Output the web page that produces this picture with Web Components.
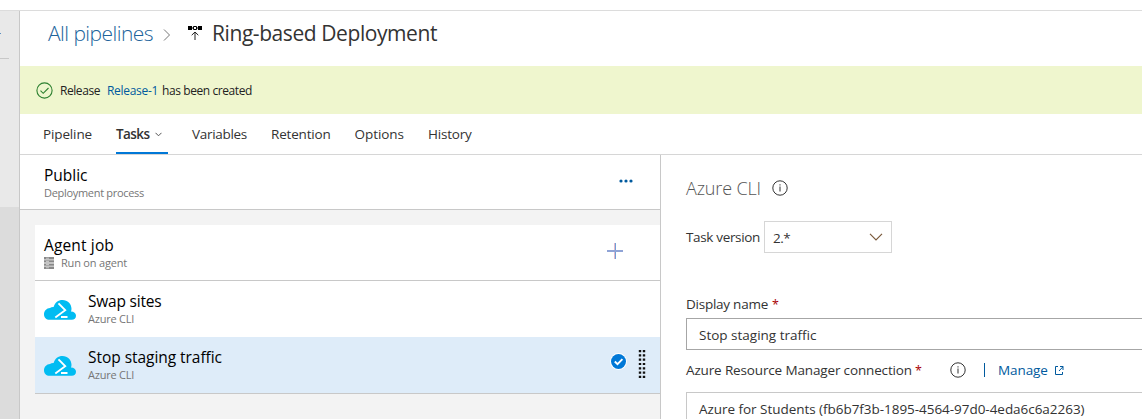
<!DOCTYPE html>
<html lang="en">
<head>
<meta charset="utf-8">
<title>Ring-based Deployment - Tasks</title>
<style>
html,body{margin:0;height:100%;overflow:hidden;background:#fff}
body{font-family:"Open Sans","Noto Sans",sans-serif;color:#333}
</style>
</head>
<body>
<release-editor></release-editor>
<script>
const define=(name,html,init)=>customElements.define(name,class extends HTMLElement{
  connectedCallback(){
    if(this.shadowRoot)return;
    const t=document.createElement('template');
    t.innerHTML=html;
    this.attachShadow({mode:'open'}).append(t.content.cloneNode(true));
    if(init)init(this);
  }
});

/* One line of text, tracked so that it fills the width in "w" */
define('fit-text','<style>:host{display:block;flex:none;white-space:pre}span{display:inline-block;white-space:pre}</style><span><slot></slot></span>',el=>{
  const span=el.shadowRoot.querySelector('span');
  const w=parseFloat(el.getAttribute('w'));
  const n=el.textContent.length;
  if(w&&n>1){
    const d=(w-span.getBoundingClientRect().width)/n;
    span.style.letterSpacing=d.toFixed(3)+'px';
    el.style.width=w+'px';
  }
});

const svg=(w,h,body)=>`<style>:host{display:block;flex:none;width:${w}px;height:${h}px}svg{display:block}</style><svg width="${w}" height="${h}" viewBox="0 0 ${w} ${h}" fill="none">${body}</svg>`;
define('icon-crumb',svg(8,12,'<path d="M1 .5 6.5 6 1 11.5" stroke="#777"/>'));
define('icon-release',svg(14,15,'<path d="M0 0h4v4H0zM10 0h4v4h-4z" fill="#000"/><path d="M5.5.5h3v3h-3zM4 2h1M9 2h1" stroke="#000"/><path d="M7 14V6.2M3.7 9.2 7 6l3.3 3.2" stroke="#222"/>'));
define('icon-success',svg(17,17,'<circle cx="8.5" cy="8.5" r="7.6" stroke="#2d8030" stroke-width="1.1"/><path d="m4.5 8.7 2.7 2.6 5.3-5.3" stroke="#2d8030" stroke-width="1.1"/>'));
define('icon-chevron-small',svg(7,5,'<path d="m.5.8 3 3 3-3" stroke="#555"/>'));
define('icon-chevron',svg(14,8,'<path d="m1 .8 6 6 6-6" stroke="#7a5a3c" stroke-width="1.2"/>'));
define('icon-more',svg(14,4,'<g fill="#005a9e"><circle cx="2" cy="2" r="1.6"/><circle cx="7" cy="2" r="1.6"/><circle cx="12" cy="2" r="1.6"/></g>'));
define('icon-plus',svg(16,16,'<path d="M7.5 0v16" stroke="#e3b9cc"/><path d="M8.5 0v16" stroke="#6e9fd8"/><path d="M0 8h16" stroke="#8fa3d6" stroke-width="2"/>'));
define('icon-server',svg(10,12,'<path d="M0 0h10v2.4H0zM0 3.2h10v2.4H0zM0 6.4h10v2.4H0zM0 9.6h10V12H0z" fill="#888"/><path d="M2 1.2h3M2 4.4h3M2 7.6h3M2 10.8h3" stroke="#ddd" stroke-width=".8"/>'));
define('icon-cloud',svg(32,20,'<path d="M5.6 19.8C2.3 19.8 0 17.4 0 14.5 0 10.9 2.6 8.3 6 8.1 7 7.2 8.2 6.9 9.6 7 11 2.6 14.2 0 18.5 0c5.1 0 8.9 3.8 9 8.7 0 1-.2 2-.5 2.9 2.9 0 5 1.7 5 4.2 0 2.4-1.8 4-4.2 4z" fill="#00bcf2"/><path d="m14.5 3.300 6.700 6.900-9.900 7.300M17 17h6.500" stroke="#fff" stroke-width="1.9"/>'));
define('icon-checked',svg(17,17,'<circle cx="8.5" cy="8.5" r="8.4" fill="#fff"/><circle cx="8.5" cy="8.5" r="7.5" fill="#0078d7"/><path d="m4.8 8.5 2.7 2.7 4.9-5" stroke="#fff" stroke-width="1.9"/>'));
define('icon-grip',svg(8,28,'<path d="M2 0v28M6 0v28" stroke="#111" stroke-width="2.4" stroke-dasharray="2.2 2.1"/>'));
define('icon-info',svg(16,16,'<circle cx="8" cy="8" r="7.2" stroke="#333"/><path d="M8 6.5V11.5M8 4.3v1.3" stroke="#444" stroke-width="1.1"/>'));
define('icon-external',svg(9,9,'<path d="M3 .5H.5v8h7V6M5 .5h3V4M8 .7 4 5" stroke="#005a9e"/>'));

define('side-rail',`<style>
:host{display:block;width:19px;flex:none;border-right:1px solid #c8c8c8;background:linear-gradient(#e9e9e9 196px,#dcdcdc 196px)}
.mark{width:1px;height:1px;padding-top:22px;background:#5b8fc0;background-clip:content-box}
.rule{width:9px;height:1px;margin-top:24px;background:#c8c8c8}
</style><div class="mark"></div><div class="rule"></div>`);

define('page-crumbs',`<style>
:host{display:flex;height:55px;padding:7px 0 0 28px;box-sizing:border-box;flex:none;font-size:21px;line-height:30px}
.all{color:#20639b;font-weight:300}icon-crumb{margin:11px 17px 0 10px}icon-release{margin:8px 10px 0 0}
</style><fit-text class="all" w="105">All pipelines</fit-text><icon-crumb></icon-crumb><icon-release></icon-release><fit-text w="225">Ring-based Deployment</fit-text>`);

define('message-bar',`<style>
:host{display:flex;align-items:center;height:48px;flex:none;background:#eff6ce;padding-left:16px;font-size:12px;color:#222}
icon-success{margin-right:7px}.link{color:#005a9e;margin:0 4px 0 7px}
</style><icon-success></icon-success><fit-text w="40">Release</fit-text><fit-text class="link" w="51">Release-1</fit-text><fit-text w="90">has been created</fit-text>`);

define('nav-tabs',`<style>
:host{display:flex;height:40px;flex:none;border-bottom:1px solid #d6d6d6;padding-left:23px;gap:24px;font-size:13.5px;color:#333}
div{display:flex;align-items:center;height:40px;box-sizing:border-box}
.on{font-weight:600;box-shadow:inset 0 -2px #0078d7;gap:5px;width:52px}
</style><div><fit-text w="49">Pipeline</fit-text></div><div class="on"><fit-text w="33.5">Tasks</fit-text><icon-chevron-small></icon-chevron-small></div><div><fit-text w="55">Variables</fit-text></div><div><fit-text w="59.5">Retention</fit-text></div><div><fit-text w="49.5">Options</fit-text></div><div><fit-text w="43.5">History</fit-text></div>`);

define('task-row',`<style>
:host{display:flex;height:56px;padding:10px 9px 0;box-sizing:border-box;background:#fff;border-bottom:1px solid #c8c8c8}
:host([plain]){border:0}
:host([selected]){background:#deecf9;height:57px}
.body{flex:1}.title{display:block;font-size:15.5px;line-height:20px;color:#000}
.sub{display:flex;font-size:11px;line-height:16px;color:#767676}
</style><slot name="icon"></slot><div class="body"><div class="title"><slot name="title"></slot></div><div class="sub"><slot name="sub"></slot></div></div><slot name="action"></slot>`);

define('task-list',`<style>
:host{display:flex;flex-direction:column;width:640px;flex:none;background:#f3f3f3;border-right:1px solid #c8c8c8}
.process{height:55px;padding-left:24px}
.cards{margin:15px 0 0 15px}
.process icon-more{margin:14px 18px 0 0}
icon-plus{margin:8px 28px 0 0}
icon-server{margin:2px 7px 0 0}
icon-cloud{margin:9px 12px 0 0}
icon-checked{margin:5.5px 11px 0 0}icon-grip{margin:3px 5px 0 0}
</style>
<task-row class="process"><fit-text slot="title" w="43.5">Public</fit-text><fit-text slot="sub" w="100">Deployment process</fit-text><icon-more slot="action"></icon-more></task-row>
<div class="cards">
<task-row><fit-text slot="title" w="70">Agent job</fit-text><icon-server slot="sub"></icon-server><fit-text slot="sub" w="66">Run on agent</fit-text><icon-plus slot="action"></icon-plus></task-row>
<task-row plain><icon-cloud slot="icon"></icon-cloud><fit-text slot="title" w="73.5">Swap sites</fit-text><fit-text slot="sub" w="46">Azure CLI</fit-text></task-row>
<task-row selected><icon-cloud slot="icon"></icon-cloud><fit-text slot="title" w="134">Stop staging traffic</fit-text><fit-text slot="sub" w="46">Azure CLI</fit-text><icon-checked slot="action"></icon-checked><icon-grip slot="action"></icon-grip></task-row>
</div>`);

define('text-field',`<style>
:host{display:flex;flex:none;align-items:center;height:32px;box-sizing:border-box;border:1px solid #a6a6a6;border-right:0;padding:1px 0 0 12px;background:#fff;color:#333}
:host([soft]){border-color:#c8c8c8}
</style><slot></slot>`);

define('task-details',`<style>
:host{display:flex;flex-direction:column;flex:1;min-width:0;overflow:hidden;padding:21px 0 0 25px;box-sizing:border-box;font-size:13.5px}
.head,.version,.label{flex:none}
.head{display:flex;align-items:center;height:24px;gap:11px;font-size:18px;font-weight:300;color:#555}
.version{display:flex;align-items:center;height:32px;margin-top:21px;gap:4px}
.select{display:flex;align-items:center;justify-content:space-between;width:128px;height:32px;box-sizing:border-box;border:1px solid #d6d6d6;padding:0 8px}
.select fit-text{padding-top:2px}
.label{display:flex;align-items:center;height:20px;gap:4px}
.name{margin:41px 0 4px}.conn{margin:10px 0 12px;gap:3px}
.req{color:#a80000;font-size:12.5px}.link{color:#005a9e}
.bar{width:1px;height:14px;background:#005a9e;margin:0 10px 0 15px}
.conn icon-info{margin-left:25px}
icon-external{margin-left:4px}
</style>
<div class="head"><fit-text w="75">Azure CLI</fit-text><icon-info></icon-info></div>
<div class="version"><fit-text w="74">Task version</fit-text><div class="select"><fit-text w="17">2.*</fit-text><icon-chevron></icon-chevron></div></div>
<div class="label name"><fit-text w="82">Display name</fit-text><fit-text class="req">*</fit-text></div>
<text-field><fit-text w="117.5">Stop staging traffic</fit-text></text-field>
<div class="label conn"><fit-text w="226">Azure Resource Manager connection</fit-text><fit-text class="req">*</fit-text><icon-info></icon-info><div class="bar"></div><fit-text class="link" w="50">Manage</fit-text><icon-external></icon-external></div>
<text-field soft><fit-text w="385.5">Azure for Students (fb6b7f3b-1895-4564-97d0-4eda6c6a2263)</fit-text></text-field>`);

define('release-editor',`<style>
:host{display:flex;flex-direction:column;height:419px;width:1142px;overflow:hidden}
.top{height:10px;flex:none;border-bottom:1px solid #dcdcdc}
.shell{display:flex;flex:1;min-height:0}.main{display:flex;flex-direction:column;flex:1;min-width:0}
.work{display:flex;flex:1;min-height:0}
</style><div class="top"></div><div class="shell"><side-rail></side-rail><div class="main"><page-crumbs></page-crumbs><message-bar></message-bar><nav-tabs></nav-tabs><div class="work"><task-list></task-list><task-details></task-details></div></div></div>`);
</script>
</body>
</html>
